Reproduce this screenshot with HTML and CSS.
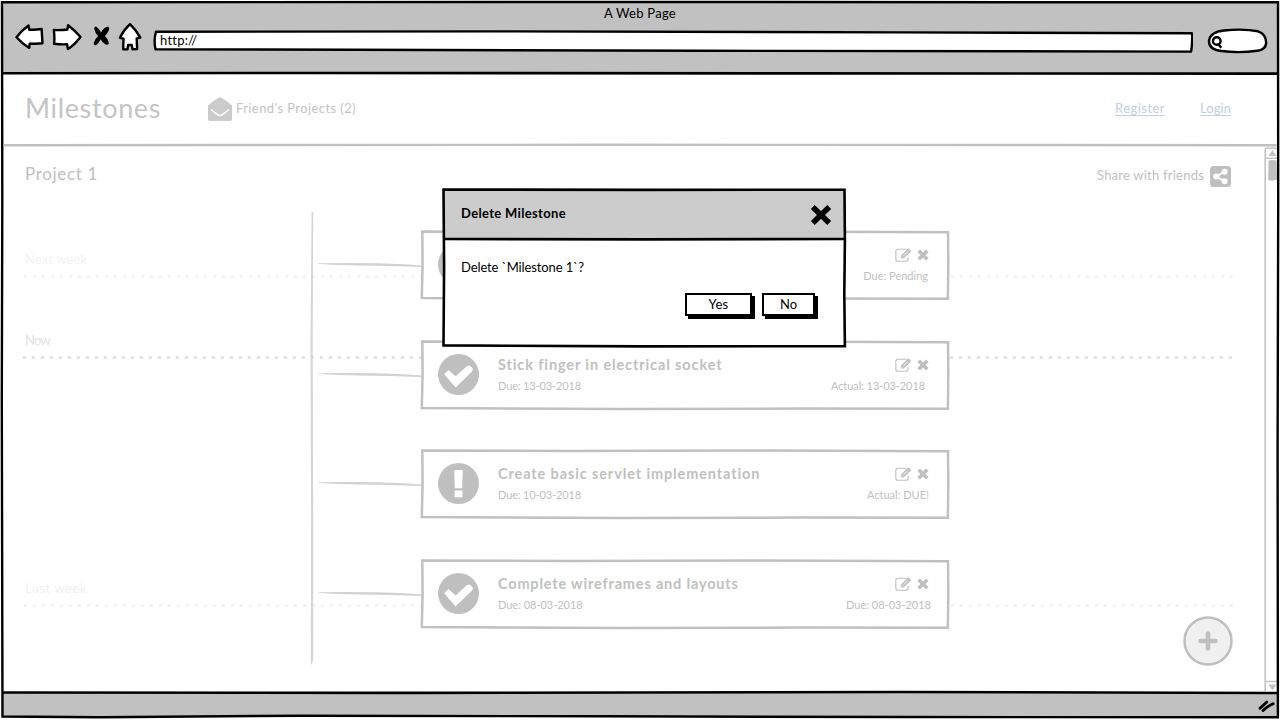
FILE: index.html
```html
<!DOCTYPE html>
<html lang="en">
<head>
<meta charset="utf-8">
<title>Milestones</title>
<link rel="stylesheet" href="styles.css">
</head>
<body>
<svg class="defs" width="0" height="0">
  <defs>
    <symbol id="check" viewBox="0 0 41 41"><circle cx="20.5" cy="20.5" r="20.5" fill="#bfbfbf"/><path d="M7 20.300l3.600-3.300 7.100 6.200L29.600 12.500q1.500-1 2.600.2l1.800 2q.8 1.200-.4 2.400L17.700 32.600z" fill="#fff" stroke="#fff" stroke-width="1.200" stroke-linejoin="round"/></symbol>
    <symbol id="alert" viewBox="0 0 41 41"><circle cx="20.5" cy="20.5" r="20.5" fill="#bfbfbf"/><path d="M16.200 7h8.600l-.6 18.200h-7.400zM16.600 27.400h7.800v6.800h-7.800z" fill="#fff"/></symbol>
    <symbol id="edit" viewBox="0 0 17 14"><path d="M11.500 1.300H3.200Q.8 1.300.8 3.600v7.300q0 2.300 2.400 2.300h7.600q2.300 0 2.300-2.300V9" fill="none" stroke="#c0c0c0" stroke-width="1.100"/><path d="M5.800 10.400V7.700L12.700.8q.7-.6 1.400 0l1.700 1.600q.6.700 0 1.400L8.700 10.400z" fill="#c0c0c0"/><path d="M8.500 7.800l4.400-4.400M6.800 8.600l1 1" stroke="#fff" stroke-width=".8"/></symbol>
    <symbol id="cross" viewBox="0 0 12 12"><path d="M1.700 1.800l8.600 8.400M10.300 1.800l-8.600 8.400" stroke="#bfbfbf" stroke-width="3.700" fill="none"/></symbol>
    <symbol id="cardline" viewBox="0 0 530 71"><path d="M2.300 1.600L150 2l180-.5L528 2.200l.3 30-.4 36.600L380 68.600 200 69 1.800 68l.8-34z" fill="#fff" stroke="#c0c0c0" stroke-width="2.500"/></symbol>
    <symbol id="branch" viewBox="0 0 104 6"><path d="M0 1.200Q30 1 60 1.200q30 .8 44 2.400v1.400Q70 3.800 40 3.400 10 3 0 1.800z" fill="#d2d2d2"/></symbol>
  </defs>
</svg>
<div class="window">
  <div class="toolbar">
    <div class="window-title"><span class="t-title">A Web Page</span></div>
    <div class="nav">
      <svg class="back" viewBox="15 22 30 30"><path d="M16.500 37.300Q22 30 28.500 25.500l.8 4.200q6 .4 12.300-.7.500 8 .9 14.300-6 .7-12.800.3l-.5 4.300Q22 43.500 16.500 37.300z"/></svg>
      <svg class="fwd" viewBox="52 22 30 30"><path d="M53.800 30q7 .4 13.600-.5l.7-4.300q6.500 5 12.400 11.800-6 8-12.600 12l-.8-4.700q-7 .3-13-.5.700-7-.3-13.800z"/></svg>
      <svg class="stop" viewBox="92 22 20 30"><path class="solid" d="M96 26.500q2.500 1.500 5 6 2.500-5 7-6 1.500 1 1.200 3-1.500 4-4.400 6.800 3.600 3 4 7.200-1.500 2-3.600.8-3-2-4.600-5-2 4.500-4.600 6-2.500.2-2.200-2.600 1.500-4 4.200-6.600-3-3-3.800-7.600.2-1.800 1.800-2z"/></svg>
      <svg class="home" viewBox="118 22 24 30"><path d="M130 24.200q6 5.800 10.300 13.400l-3.600.8.400 10.600-4.600.3-.8-4.400-3.600.1-.6 4.400-4.300-.2.300-10.600-3.600-.8q3.600-7.600 10.100-13.600z"/></svg>
      <div class="address">
        <svg viewBox="153 30 1040 23"><path d="M156 31.700L500 31.400l400 1 292 .8q.7 9-.9 18.400L700 50.800 350 49.700l-194.500-.5Q153.500 40 156 31.700z"/></svg>
        <span class="t-url">http://</span>
      </div>
      <svg class="search" viewBox="1206 26 62 28"><path d="M1209 41q1-9 15-10.500 20-2 34 .8 8 2.500 8.200 11.500-.5 7-9 8-18 2.500-36 .2-12.500-1.500-12.200-10z"/><circle cx="1216.800" cy="41" r="3.800"/><path d="M1217.500 43.500l3.800 4.300"/></svg>
    </div>
  </div>
  <header class="site-header">
    <h1 class="t-brand">Milestones</h1>
    <div class="friends">
      <svg class="mail" viewBox="0 0 24 24"><path d="M0 8.500Q5 3.500 12 0q7 3.500 12 8.500V22q0 2-2 2H2q-2 0-2-2z" fill="#cbcbcb"/><path d="M3 12.500q4.500 4 8 6h2q3.500-2 8-6" fill="none" stroke="#fff" stroke-width="1.500"/></svg>
      <span class="t-friends">Friend's Projects (2)</span>
    </div>
    <a class="link t-register">Register</a>
    <a class="link t-login">Login</a>
  </header>
  <div class="body">
    <main class="page">
      <div class="project-head">
        <h2 class="t-project">Project 1</h2>
        <div class="share"><span class="t-share">Share with friends</span>
          <svg viewBox="0 0 21 21"><rect width="21" height="21" rx="3.500" fill="#bfbfbf"/><path d="M14.500 5.500L6.500 10.500l8 5" fill="none" stroke="#fff" stroke-width="2"/><circle cx="14.600" cy="5.800" r="3" fill="#fff"/><circle cx="6.300" cy="10.500" r="3" fill="#fff"/><circle cx="14.600" cy="15.200" r="3" fill="#fff"/></svg>
        </div>
      </div>
      <div class="timeline">
        <div class="periods">
          <div class="period next"><span>Next week</span><svg viewBox="0 0 1214 5"><path d="M3 2.500H1212"/></svg></div>
          <div class="period now"><span>Now</span><svg viewBox="0 0 1214 5"><path d="M2 2.500H1212"/></svg></div>
          <div class="period last"><span>Last week</span><svg viewBox="0 0 1214 5"><path d="M3 2.500H1212"/></svg></div>
        </div>
        <svg class="trunk" viewBox="0 0 6 454"><path d="M2.600 1Q3.600-.5 4.200 2L3.700 130 4.200 300v146q-.4 6-1.600 8-1-2-.8-6L2 300 1.500 130z" fill="#d6d6d6"/></svg>
        <div class="items">
          <div class="item"><svg class="branch"><use href="#branch"/></svg>
            <article class="card"><svg class="outline"><use href="#cardline"/></svg><svg class="state"><use href="#check"/></svg>
              <div class="info"></div>
              <div class="side"><div class="actions"><svg class="edit"><use href="#edit"/></svg><svg class="cross"><use href="#cross"/></svg></div><span class="t-s1">Due: Pending</span></div></article></div>
          <div class="item"><svg class="branch"><use href="#branch"/></svg>
            <article class="card"><svg class="outline"><use href="#cardline"/></svg><svg class="state"><use href="#check"/></svg>
              <div class="info"><h3>Stick finger in electrical socket</h3><p>Due: 13-03-2018</p></div>
              <div class="side"><div class="actions"><svg class="edit"><use href="#edit"/></svg><svg class="cross"><use href="#cross"/></svg></div><span class="t-s2">Actual: 13-03-2018</span></div></article></div>
          <div class="item"><svg class="branch"><use href="#branch"/></svg>
            <article class="card"><svg class="outline"><use href="#cardline"/></svg><svg class="state"><use href="#alert"/></svg>
              <div class="info"><h3>Create basic servlet implementation</h3><p>Due: 10-03-2018</p></div>
              <div class="side"><div class="actions"><svg class="edit"><use href="#edit"/></svg><svg class="cross"><use href="#cross"/></svg></div><span>Actual: DUE!</span></div></article></div>
          <div class="item"><svg class="branch"><use href="#branch"/></svg>
            <article class="card"><svg class="outline"><use href="#cardline"/></svg><svg class="state"><use href="#check"/></svg>
              <div class="info"><h3 class="t-c4">Complete wireframes and layouts</h3><p class="t-due4">Due: 08-03-2018</p></div>
              <div class="side"><div class="actions"><svg class="edit"><use href="#edit"/></svg><svg class="cross"><use href="#cross"/></svg></div><span class="t-s4">Due: 08-03-2018</span></div></article></div>
        </div>
      </div>
    </main>
    <svg class="scrollbar" viewBox="1264 147 14 545"><path d="M1265.200 149v542M1265 148.500q6-1 13 0M1265 158.200h13M1265 681.500h13" fill="none" stroke="#c4c4c4" stroke-width="1.600"/><path d="M1268.500 156l4-6 4 6z" fill="#c4c4c4"/><path d="M1268.500 684.500h8l-4 6z" fill="#c4c4c4"/><path d="M1268.500 160.500q4-1.200 8 0l.5 19q-4.500 2-8.800.5z" fill="#bfbfbf"/></svg>
  </div>
  <footer class="statusbar"><svg viewBox="1256 698 20 18"><path d="M1260 709.300l6.800-6.300M1263 711.500q4-4.200 10.200-6.800" fill="none" stroke="#000" stroke-width="2.800" stroke-linecap="round"/></svg></footer>

  <svg class="frame" viewBox="0 0 1280 720"><path d="M2 2.200L640 2l638 .3.200 200-.6 250 .3 265L900 717l-300-.700L300 715.700l-200 1.500L2.500 716.500 1.800 400 2.300 200z" fill="none" stroke="#000" stroke-width="2.400"/><path d="M2 73.200L300 73l500 .4 478 .2" stroke="#000" stroke-width="2.600" fill="none"/><path d="M3.500 145.200l600-.4 673 .4" fill="none" stroke="#c0c0c0" stroke-width="2.400"/><path d="M2 692.500l400 .4 500-.9 376 1" stroke="#000" stroke-width="2.600" fill="none"/></svg>

  <button class="add"><svg viewBox="0 0 50 50"><circle cx="25" cy="25" r="23.500" fill="#f0f0f0" stroke="#bfbfbf" stroke-width="2.500"/><path d="M25 17.500v15M17.500 25h15" stroke="#bfbfbf" stroke-width="4.600" stroke-linecap="round"/></svg></button>

  <div class="dialog">
    <svg class="dialog-line" viewBox="442 187 405 162"><path d="M443.500 189.500l200 .4 201-.2.400 50-.6 55 .6 51.500-200 .2-201.400-1 .6-80z" fill="none" stroke="#000" stroke-width="2.600"/><path d="M443 239l200 .4 202-.4" stroke="#000" stroke-width="2.600" fill="none"/></svg>
    <div class="dialog-head"><span class="t-dtitle">Delete Milestone</span><svg viewBox="0 0 22 22"><path d="M2.800 3l16.400 16M19.200 3L2.800 19" stroke="#000" stroke-width="5.600"/></svg></div>
    <p class="t-question">Delete `Milestone 1`?</p>
    <div class="buttons"><button class="btn yes">Yes</button><button class="btn no">No</button></div>
  </div>
</div>
</body>
</html>
```
FILE: styles.css
```css
* { box-sizing: border-box; }
body { margin: 0; font: 13px/16px Lato, sans-serif; color: #000; background: #fff; overflow: hidden; }
h1, h2, h3, p { margin: 0; font-weight: 400; white-space: nowrap; }
svg { display: block; flex: none; }
span, a { white-space: nowrap; }
button { font: inherit; color: inherit; padding: 0; border: 0; background: none; }
.defs { position: absolute; }
.window { position: relative; width: 1280px; height: 720px; display: flex; flex-direction: column; background: #fff; }
.frame { position: absolute; inset: 0; width: 1280px; height: 720px; pointer-events: none; }
.toolbar { margin: 2px 2px 0; height: 71px; background: #c1c1c1; }
.window-title { height: 20px; padding-top: 3px; text-align: center; letter-spacing: .27px; }
.nav { display: flex; height: 30px; padding-left: 13px; fill: #fff; stroke: #000; stroke-width: 2.4; stroke-linejoin: round; }
.back { width: 30px; height: 30px; margin-right: 7px; }
.fwd { width: 30px; height: 30px; margin-right: 10px; }
.stop { width: 20px; height: 30px; margin-right: 6px; }
.stop .solid { fill: #000; stroke-width: 0; }
.home { width: 24px; height: 30px; margin-right: 11px; }
.address { position: relative; width: 1040px; height: 23px; margin: 8px 13px 0 0; padding: 2px 0 0 7px; }
.address svg { position: absolute; inset: 0; width: 1040px; height: 23px; }
.address span { position: relative; display: block; stroke: none; letter-spacing: .22px; }
.search { width: 62px; height: 28px; margin-top: 4px; }

.site-header { height: 72px; display: flex; align-items: center; padding: 0 49px 2px 25px; color: #c4c4c4; }
.t-brand { width: 183px; font-size: 27px; line-height: 32px; letter-spacing: .65px; }
.friends { display: flex; align-items: center; gap: 4px; margin-right: auto; }
.mail { width: 24px; height: 24px; margin-top: 2px; }
.t-friends { letter-spacing: .41px; }
.link { color: #c0cfe2; border-bottom: 1px solid #c0cfe2; line-height: 14px; }
.t-register { margin-right: 35px; letter-spacing: .46px; }
.t-login { letter-spacing: .06px; }

.body { display: flex; height: 547px; padding: 2px 2px 0 2px; }
.page { width: 1262px; height: 545px; }
.scrollbar { width: 14px; height: 545px; }
.project-head { display: flex; justify-content: space-between; height: 64px; padding: 16px 33px 0 23px; color: #c0c0c0; }
.t-project { font-size: 17px; line-height: 22px; letter-spacing: .66px; }
.share { display: flex; gap: 6px; padding-top: 3px; }
.share svg { width: 21px; height: 21px; }
.t-share { letter-spacing: .22px; padding-top: 1px; }

.timeline { display: grid; grid-template-columns: 308px 954px; }
.periods { grid-area: 1 / 1 / 2 / 3; padding: 40px 0 0 20px; }
.period { height: 28px; }
.period span { display: block; padding-left: 3px; line-height: 16px; height: 23px; }
.period svg { width: 1214px; height: 5px; fill: none; stroke: currentColor; stroke-width: 3; stroke-linecap: round; stroke-dasharray: .8 8.2; }
.next { color: #f3f3f3; letter-spacing: .09px; }
.now { color: #e2e2e2; margin-top: 53px; letter-spacing: -.74px; }
.last { color: #f1f1f1; margin-top: 220px; letter-spacing: .56px; }
.trunk { grid-area: 1 / 2; width: 6px; height: 454px; margin-left: -1px; }
.items { grid-area: 1 / 2; padding: 19px 0 0 8px; display: flex; flex-direction: column; gap: 39.6px; color: #c0c0c0; }
.item { display: flex; height: 70px; }
.branch { width: 104px; height: 6px; margin-top: 32px; }
.card { position: relative; display: flex; width: 529px; height: 70px; margin-left: -2px; }
.outline { position: absolute; inset: 0; width: 530px; height: 71px; }
.state { position: relative; width: 41px; height: 41px; margin: 14px 19.5px 0 17.5px; }
.info { position: relative; width: 270px; padding-top: 15px; }
.info h3 { font-size: 14.5px; font-weight: 700; line-height: 19px; letter-spacing: .88px; }
.info .t-c4 { letter-spacing: .82px; }
.info p { font-size: 11px; line-height: 14px; margin-top: 5px; letter-spacing: -.14px; }
.info .t-due4 { letter-spacing: -.02px; }
.side { position: relative; margin-left: auto; padding-right: 20px; display: flex; flex-direction: column; align-items: flex-end; font-size: 11px; line-height: 14px; }
.actions { display: flex; gap: 5px; padding-top: 18px; height: 39px; }
.edit { width: 17px; height: 14px; }
.cross { width: 12px; height: 12px; margin-top: 1px; }
.side .t-s1 { margin-right: 1px; }
.t-s2 { margin-right: 4px; letter-spacing: -.08px; }
.t-s4 { margin-right: -2px; }

.statusbar { height: 25px; margin: 0 2px; background: #c1c1c1; display: flex; justify-content: flex-end; align-items: center; padding-right: 2px; }
.statusbar svg { width: 20px; height: 18px; margin-top: 3px; }
.add { position: absolute; left: 1183px; top: 616px; }
.add svg { width: 50px; height: 50px; }

.dialog { position: absolute; left: 442px; top: 187px; width: 405px; height: 162px; padding: 2px; background: #fff; background-clip: content-box; }
.dialog-line { position: absolute; inset: 0; width: 405px; height: 162px; }
.dialog-head { height: 50px; background: #ccc; display: flex; justify-content: space-between; align-items: center; padding: 0 13px 2px 17px; font-weight: 700; letter-spacing: .33px; }
.dialog-head svg { width: 22px; height: 22px; margin-top: 3px; fill: none; }
.t-question { padding: 20px 0 0 17px; letter-spacing: -.11px; }
.buttons { display: flex; gap: 10px; padding: 18px 0 0 241px; }
.btn { height: 23px; border: 2px solid #000; background: #fff; box-shadow: 3px 3px 0 #000; line-height: 19px; }
.yes { width: 67px; letter-spacing: .3px; }
.no { width: 53px; }
```
